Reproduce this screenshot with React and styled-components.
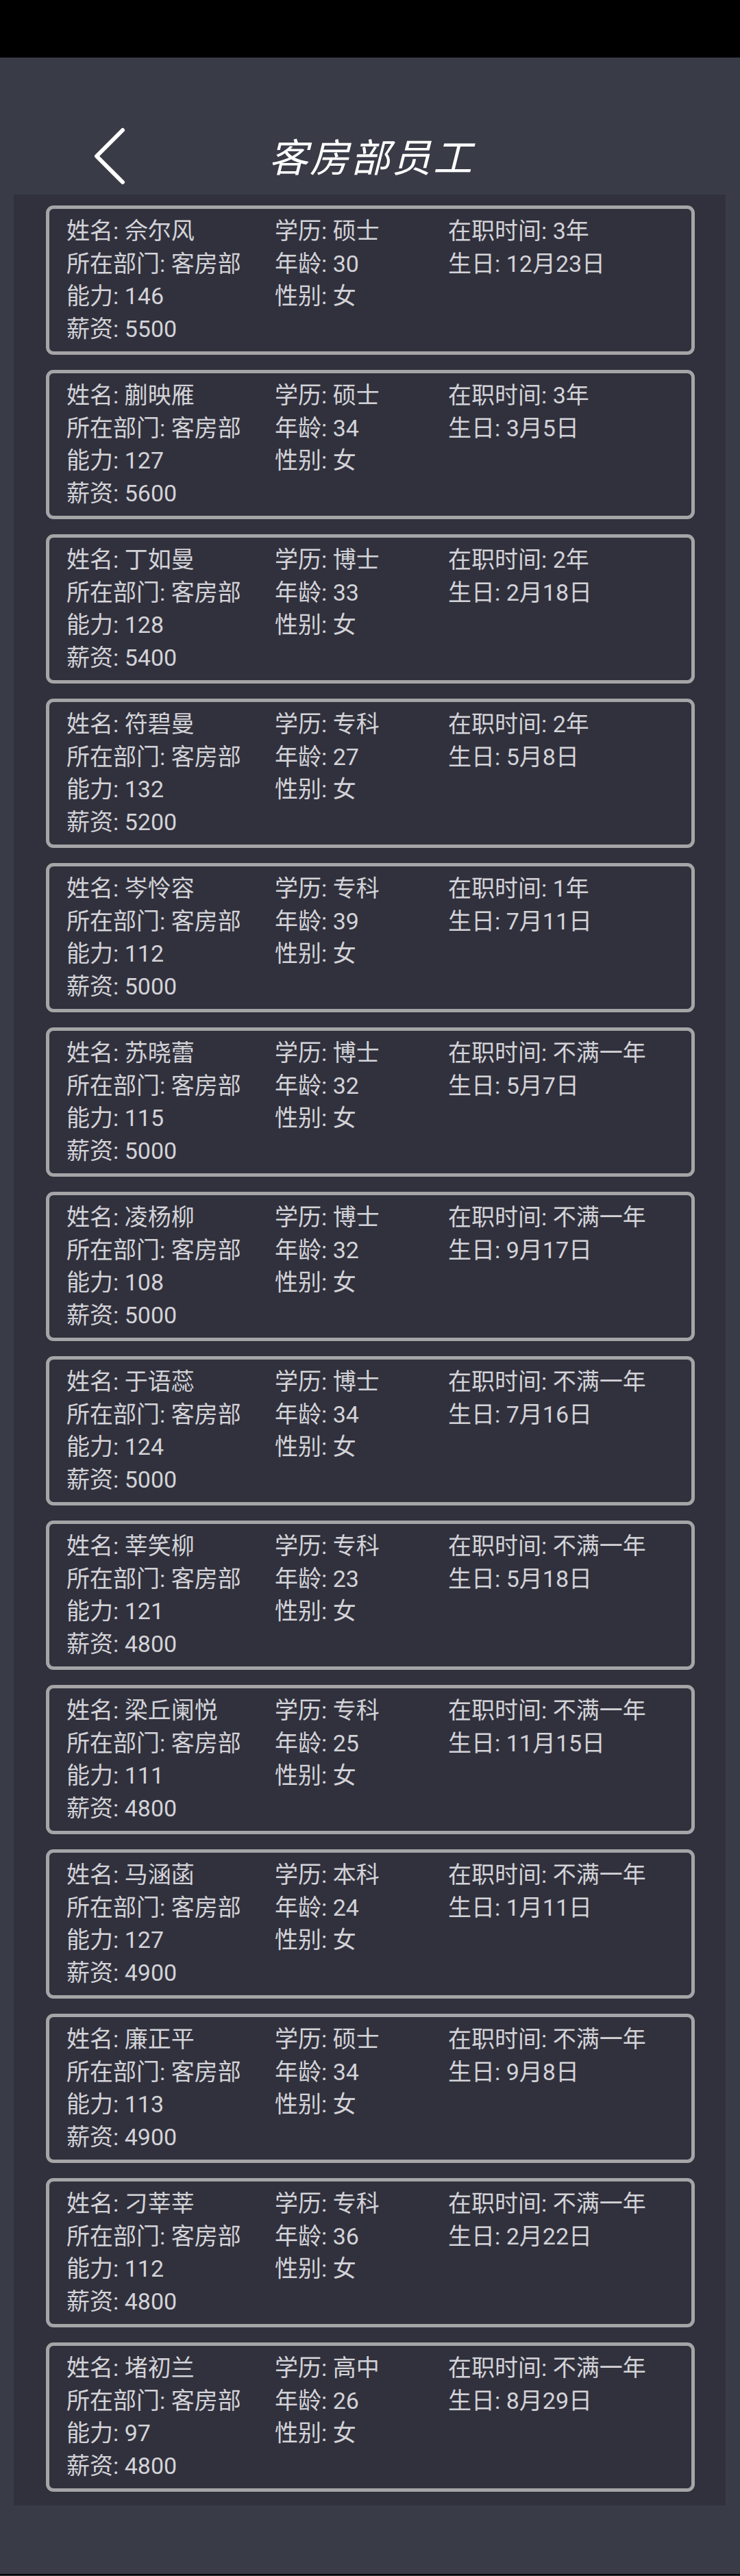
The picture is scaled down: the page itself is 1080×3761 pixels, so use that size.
import styled, { createGlobalStyle } from "styled-components";

const GlobalStyle = createGlobalStyle`
  html, body {
    margin: 0;
    padding: 0;
    background: #393c47;
  }
  body {
    font-family: Roboto, "Noto Sans CJK SC", sans-serif;
  }
`;

const staff = [
  { name: "佘尔风", edu: "硕士", years: "3年", age: 30, birthday: "12月23日", ability: 146, salary: 5500 },
  { name: "蒯映雁", edu: "硕士", years: "3年", age: 34, birthday: "3月5日", ability: 127, salary: 5600 },
  { name: "丁如曼", edu: "博士", years: "2年", age: 33, birthday: "2月18日", ability: 128, salary: 5400 },
  { name: "符碧曼", edu: "专科", years: "2年", age: 27, birthday: "5月8日", ability: 132, salary: 5200 },
  { name: "岑怜容", edu: "专科", years: "1年", age: 39, birthday: "7月11日", ability: 112, salary: 5000 },
  { name: "苏晓蕾", edu: "博士", years: "不满一年", age: 32, birthday: "5月7日", ability: 115, salary: 5000 },
  { name: "凌杨柳", edu: "博士", years: "不满一年", age: 32, birthday: "9月17日", ability: 108, salary: 5000 },
  { name: "于语蕊", edu: "博士", years: "不满一年", age: 34, birthday: "7月16日", ability: 124, salary: 5000 },
  { name: "莘笑柳", edu: "专科", years: "不满一年", age: 23, birthday: "5月18日", ability: 121, salary: 4800 },
  { name: "梁丘阑悦", edu: "专科", years: "不满一年", age: 25, birthday: "11月15日", ability: 111, salary: 4800 },
  { name: "马涵菡", edu: "本科", years: "不满一年", age: 24, birthday: "1月11日", ability: 127, salary: 4900 },
  { name: "廉正平", edu: "硕士", years: "不满一年", age: 34, birthday: "9月8日", ability: 113, salary: 4900 },
  { name: "刁莘莘", edu: "专科", years: "不满一年", age: 36, birthday: "2月22日", ability: 112, salary: 4800 },
  { name: "堵初兰", edu: "高中", years: "不满一年", age: 26, birthday: "8月29日", ability: 97, salary: 4800 },
];

export default function App() {
  return (
    <Page>
      <GlobalStyle />
      <StatusBar />
      <Header>
        <BackButton aria-label="返回">
          <svg width="52" height="88" viewBox="0 0 52 88">
            <polyline
              points="44,6 6,44 44,82"
              fill="none"
              stroke="#ffffff"
              strokeWidth="6"
              strokeLinecap="round"
              strokeLinejoin="round"
            />
          </svg>
        </BackButton>
        <Title>客房部员工</Title>
        <span />
      </Header>
      <ListPanel>
        {staff.map((p) => (
          <Card key={p.name}>
            <Field>姓名: {p.name}</Field>
            <Field>学历: {p.edu}</Field>
            <Field>在职时间: {p.years}</Field>
            <Field>所在部门: 客房部</Field>
            <Field>年龄: {p.age}</Field>
            <Field>生日: {p.birthday}</Field>
            <Field>能力: {p.ability}</Field>
            <Field>性别: 女</Field>
            <Field />
            <Field>薪资: {p.salary}</Field>
          </Card>
        ))}
      </ListPanel>
      <Footer />
    </Page>
  );
}

const Page = styled.div`
  display: flex;
  flex-direction: column;
  width: 1080px;
  background: #393c47;
`;

const StatusBar = styled.div`
  height: 84px;
  background: #000;
`;

const Header = styled.header`
  display: grid;
  grid-template-columns: 1fr auto 1fr;
  align-items: center;
  height: 84px;
  padding: 100px 0 16px;
`;

const BackButton = styled.button`
  justify-self: start;
  display: flex;
  align-items: center;
  margin-left: 135px;
  padding: 0;
  border: none;
  background: none;
  cursor: pointer;
`;

const Title = styled.h1`
  margin: 0 0 4px;
  padding-left: 4px;
  color: #ffffff;
  font-family: "Noto Sans CJK SC", sans-serif;
  font-size: 57px;
  font-weight: 400;
  font-style: italic;
  letter-spacing: 3px;
  line-height: 1;
`;

const ListPanel = styled.main`
  display: flex;
  flex-direction: column;
  gap: 22px;
  margin: 0 21px 0 20px;
  padding: 16px 45px 20px 47px;
  background: #31313d;
`;

const Card = styled.section`
  box-sizing: border-box;
  display: grid;
  grid-template-columns: 304px 253px auto;
  align-content: start;
  height: 218px;
  padding: 9px 0 0 25px;
  border: 5px solid #a5a5a8;
  border-radius: 11px;
  background: #31313d;
`;

const Field = styled.div`
  color: #d3d3d8;
  font-family: Roboto, "Noto Sans CJK SC", sans-serif;
  font-size: 34px;
  line-height: 47.5px;
  white-space: nowrap;
`;

const Footer = styled.footer`
  height: 100px;
  border-bottom: 2px solid #000;
`;
